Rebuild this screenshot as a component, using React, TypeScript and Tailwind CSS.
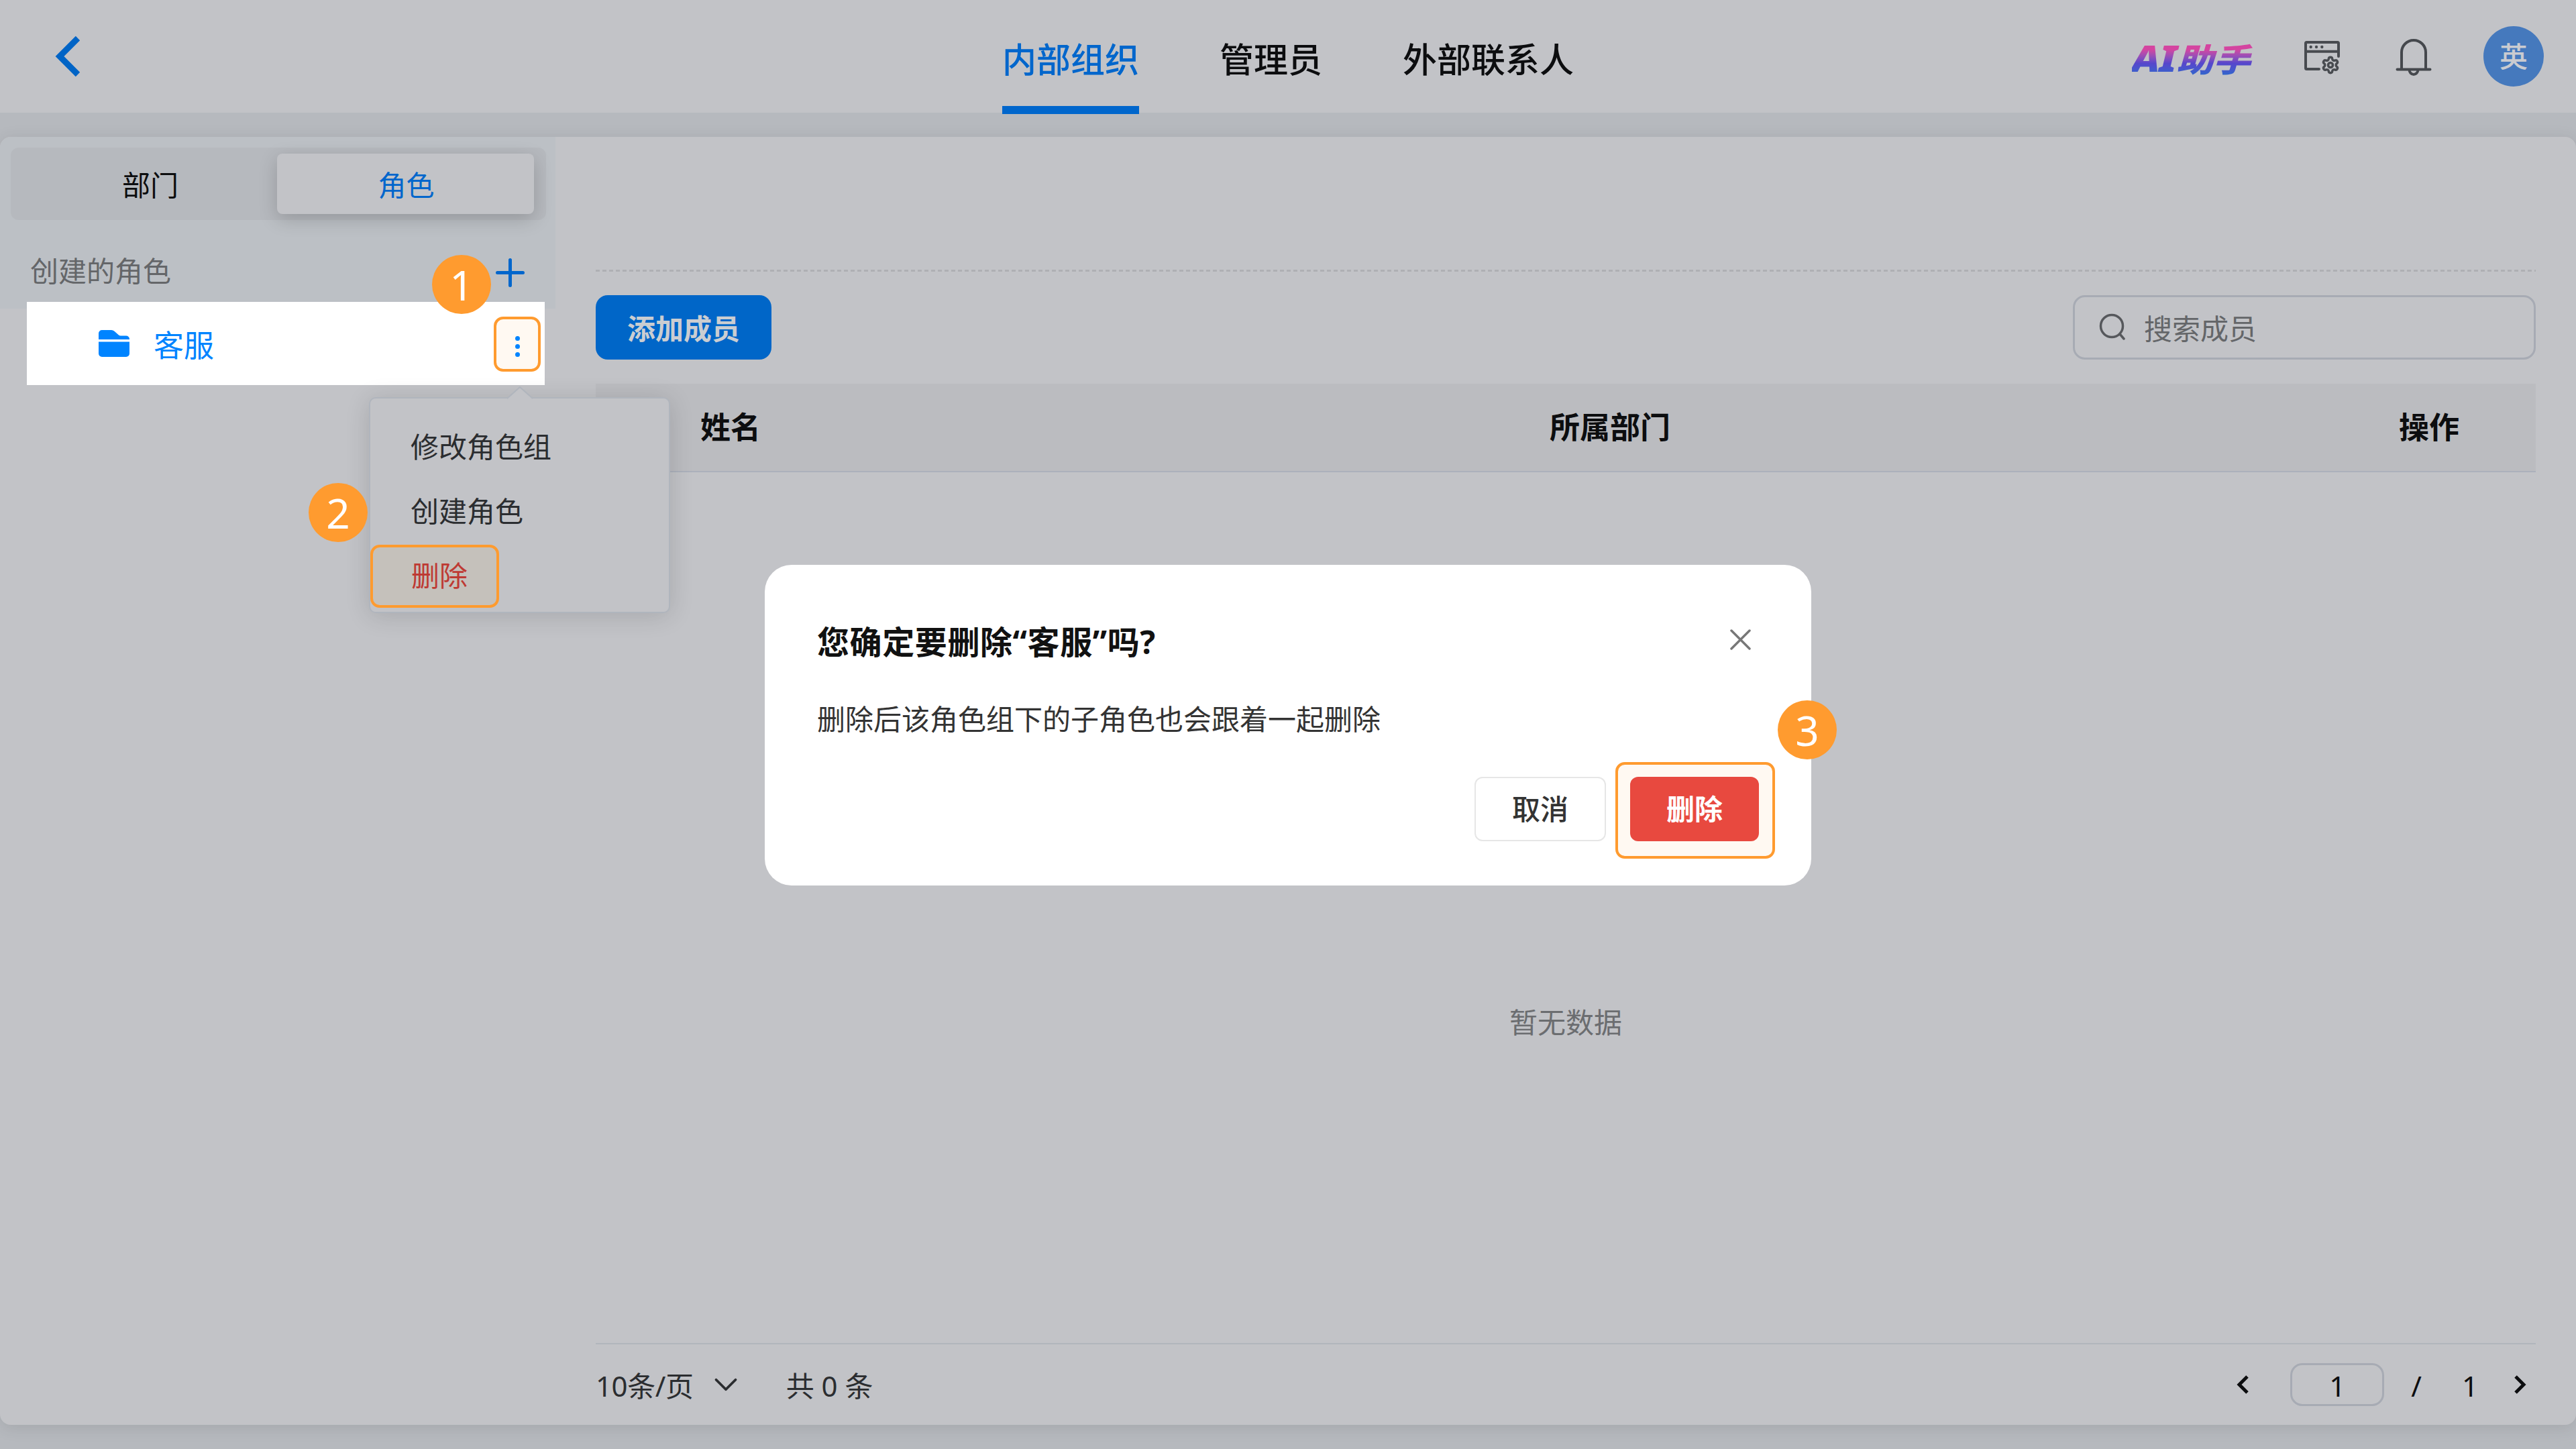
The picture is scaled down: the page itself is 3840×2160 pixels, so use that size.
import { ChevronDown, Settings } from 'lucide-react';

const tabs = ['内部组织', '管理员', '外部联系人'];

const columns = [
  { label: '姓名', width: 'w-[1266px]' },
  { label: '所属部门', width: 'w-[1266px]' },
  { label: '操作', width: 'w-[203px]' },
];

function BackIcon() {
  return (
    <svg className="w-[44px] h-[64px]" viewBox="0 0 44 64" fill="none" stroke="#0064c6" strokeWidth="9">
      <path d="M37 5 10 32l27 27" />
    </svg>
  );
}

function WindowSettingsIcon() {
  return (
    <svg className="w-[56px] h-[50px] mt-[4px]" viewBox="0 0 56 50" fill="none" stroke="#484b50" strokeWidth="4" strokeLinecap="round" strokeLinejoin="round">
      <path d="M23 42H4.500A1.500 1.500 0 0 1 3 40.500V3.500A1.500 1.500 0 0 1 4.500 2h46A1.500 1.500 0 0 1 52 3.500V23M3 15.700h49" />
      <g fill="#484b50" stroke="none">
        <circle cx="10.700" cy="9" r="2.200" />
        <circle cx="19" cy="9" r="2.200" />
        <circle cx="27.300" cy="9" r="2.200" />
      </g>
      <Settings x={26} y={22} width={28} height={28} color="#484b50" strokeWidth={3} />
    </svg>
  );
}

function BellIcon() {
  return (
    <svg className="w-[54px] h-[58px] mt-[4px]" viewBox="0 0 54 58" fill="none" stroke="#45484d" strokeWidth="4" strokeLinecap="round">
      <path d="M9 46V21a18 18 0 0 1 36 0v25M2.500 46.500h49M20.500 47a6.500 7 0 0 0 13 0" />
    </svg>
  );
}

function FolderIcon() {
  return (
    <svg className="w-[46px] h-[40px]" viewBox="0 0 46 40" fill="#0084ff">
      <path d="M0 14V5a5 5 0 0 1 5-5h14q2.500 0 4.500 1.800L30 7.500q1.200 1 3 1h8a5 5 0 0 1 5 5v.5z" />
      <path d="M0 17.500h46V35a5 5 0 0 1-5 5H5a5 5 0 0 1-5-5z" />
    </svg>
  );
}

function StepBadge({ step, className }: { step: number; className: string }) {
  return (
    <div className={`absolute flex items-center justify-center w-[88px] h-[88px] rounded-full bg-[#ff9b2f] text-white text-[62px] leading-none ${className}`}>
      {step}
    </div>
  );
}

function Header() {
  return (
    <header className="grid grid-cols-3 h-[168px] shrink-0">
      <div className="flex items-center h-[168px] pl-[79px]">
        <BackIcon />
      </div>
      <nav className="flex justify-center gap-[120px] h-[168px]">
        {tabs.map((tab, i) => (
          <div
            key={tab}
            className={`relative flex items-center h-[176px] text-[51px] leading-none whitespace-nowrap font-medium ${
              i === 0 ? 'text-[#0066cc]' : 'text-[#0c0d0f]'
            }`}
          >
            {tab}
            {i === 0 && <span className="absolute left-0 right-0 top-[158px] h-[12px] bg-[#0066cc]" />}
          </div>
        ))}
      </nav>
      <div className="flex items-center justify-end h-[168px] pr-[48px]">
        <div className="w-[182px] mr-[74px] pt-[8px]">
          <span className="block w-[165px] origin-left scale-x-[1.15] text-[48px] leading-[58px] font-black italic whitespace-nowrap text-transparent bg-clip-text bg-linear-to-b from-[#d444a0] from-25% via-[#5646cc] via-60% to-[#2c66cc] to-90%">
            <span className="text-[54px] leading-none tracking-[-1px]">AI</span>助手
          </span>
        </div>
        <WindowSettingsIcon />
        <div className="w-[81px]" />
        <BellIcon />
        <div className="ml-[77px] flex items-center justify-center w-[90px] h-[90px] rounded-full bg-[#4579bd] text-[#c9cbd0] text-[42px] leading-none font-medium">
          英
        </div>
      </div>
    </header>
  );
}

function Sidebar() {
  return (
    <aside className="w-[828px] shrink-0">
      <div className="h-[256px] pt-[16px] pl-[16px] pr-[14px] rounded-tl-[16px] bg-[#bcc0c5]">
        <div className="flex h-[108px] p-[9px] pr-[18px] rounded-[12px] bg-[#b6b9be] text-[42px] leading-none">
          <div className="flex flex-1 items-center justify-center pl-[26px] pr-[16px] pt-[3px] text-[#0c0d0f]">部门</div>
          <div className="flex w-[383px] items-center justify-center pl-[2px] pt-[3px] rounded-[8px] bg-[#c2c3c7] text-[#0066cc] shadow-[0_8px_28px_rgba(0,0,0,0.18)]">
            角色
          </div>
        </div>
        <div className="flex items-center justify-between pl-[29px] pr-[32px] pt-[52px] text-[42px] leading-[56px] text-[#646669]">
          <span className="mt-[-4px]">创建的角色</span>
          <svg className="w-[43px] h-[43px]" viewBox="0 0 43 43" stroke="#0066cc" strokeWidth="5" strokeLinecap="round">
            <path d="M21.500 2.500v38M2.500 21.500h38" />
          </svg>
        </div>
      </div>
      {/* Highlighted role group */}
      <div className="relative flex items-center w-[772px] h-[124px] ml-[40px] mt-[-10px] pl-[107px] bg-white">
        <FolderIcon />
        <span className="ml-[36px] mt-[4px] text-[45px] leading-none text-[#0084ff]">客服</span>
        <div className="ml-auto mr-[6px] flex flex-col items-center justify-center gap-[5px] w-[70px] h-[82px] mt-[2px] rounded-[14px] border-4 border-[#ff9b2f] bg-[#fff9f2] pt-[6px]">
          <i className="w-[7px] h-[7px] rounded-full bg-[#0084ff]" />
          <i className="w-[7px] h-[7px] rounded-full bg-[#0084ff]" />
          <i className="w-[7px] h-[7px] rounded-full bg-[#0084ff]" />
        </div>
      </div>
    </aside>
  );
}

function RoleMenu() {
  return (
    <div className="absolute left-[550px] top-[592px] w-[449px] h-[322px] pt-[24px] rounded-[10px] border-2 border-[#b0b5bd] bg-[#c2c3c7] shadow-[0_4px_36px_rgba(0,0,0,0.14)] text-[42px] leading-[96px] text-[#2b2d30]">
      <svg className="absolute left-[203px] top-[-18px] w-[40px] h-[20px]" viewBox="0 0 40 20" fill="#c2c3c7" stroke="#b0b5bd" strokeWidth="2">
        <path d="M1 18 20 1l19 17" />
      </svg>
      <div className="pl-[60px]">修改角色组</div>
      <div className="pl-[60px]">创建角色</div>
      <div className="flex items-center w-[192px] h-[94px] mt-[2px] pl-[57px] pb-[2px] rounded-[14px] border-4 border-[#ff9b2f] bg-[#c5c1bb] text-[#be3a33] leading-none">
        删除
      </div>
    </div>
  );
}

function Members() {
  return (
    <main className="flex flex-col flex-1 pl-[60px] pr-[60px]">
      <div className="h-[198px] shrink-0" />
      <div className="h-[3px] shrink-0 bg-[repeating-linear-gradient(90deg,#afb0b4_0_6px,transparent_6px_10px)]" />
      <div className="flex justify-between mt-[35px]">
        <button className="w-[262px] h-[96px] pt-[3px] rounded-[18px] bg-[#0066c8] text-[42px] leading-none font-bold text-[#cbcdd1]">
          添加成员
        </button>
        <div className="flex items-center w-[690px] h-[96px] pl-[36px] rounded-[18px] border-3 border-[#a7abb4] text-[42px] leading-none text-[#646669]">
          <svg className="w-[40px] h-[40px] mr-[27px] mt-[-2px]" viewBox="0 0 40 40" fill="none" stroke="#56585c" strokeWidth="3.500" strokeLinecap="round">
            <circle cx="19" cy="19" r="16.500" />
            <path d="m31 31 6 7" />
          </svg>
          <span className="pt-[3px]">搜索成员</span>
        </div>
      </div>
      <div className="flex items-center h-[132px] mt-[36px] pl-[156px] pb-[2px] shrink-0 border-b-2 border-[#acb1bb] bg-[#bbbcc0] text-[45px] leading-none font-bold text-[#0c0d0f]">
        {columns.map(col => (
          <div key={col.label} className={`${col.width} shrink-0`}>{col.label}</div>
        ))}
      </div>
      <div className="flex-1 pt-[799px] text-center text-[42px] leading-[42px] text-[#6b6d70]">暂无数据</div>
      <footer className="flex items-center h-[122px] shrink-0 border-t-2 border-[#b1b6bc] text-[42px] leading-none text-[#2b2d30]">
        <span className="pt-[3px] tracking-[-0.4px]">10条/页</span>
        <ChevronDown className="w-[58px] h-[58px] ml-[19px]" strokeWidth={1.600} />
        <span className="ml-[61px] pt-[3px]">共 0 条</span>
        <div className="flex items-center ml-auto pr-[14px] text-[#0c0d0f]">
          <svg className="w-[20px] h-[30px]" viewBox="0 0 20 30" fill="none" stroke="currentColor" strokeWidth="5">
            <path d="M16 3 4 15l12 12" />
          </svg>
          <div className="flex items-center justify-center ml-[60px] w-[140px] h-[64px] pt-[3px] rounded-[18px] border-3 border-[#a7abb4]">1</div>
          <span className="ml-[40px] pt-[3px]">/</span>
          <span className="ml-[60px] pt-[3px]">1</span>
          <svg className="w-[20px] h-[30px] ml-[52px]" viewBox="0 0 20 30" fill="none" stroke="currentColor" strokeWidth="5">
            <path d="m4 3 12 12L4 27" />
          </svg>
        </div>
      </footer>
    </main>
  );
}

function ConfirmDialog() {
  return (
    <div className="absolute left-[1140px] top-[842px] flex flex-col w-[1560px] h-[478px] rounded-[40px] bg-white">
      <div className="flex items-center justify-between pl-[78px] pr-[90px] pt-[82px]">
        <h2 className="text-[48px] leading-[66px] tracking-[0.6px] font-bold text-[#111]">您确定要删除“客服”吗?</h2>
        <svg className="w-[31px] h-[31px] mt-[-8px]" viewBox="0 0 31 31" stroke="#777" strokeWidth="3.500" strokeLinecap="round">
          <path d="m2 2 27 27M29 2 2 29" />
        </svg>
      </div>
      <p className="pl-[78px] mt-[52px] text-[42px] leading-[60px] text-[#333]">删除后该角色组下的子角色也会跟着一起删除</p>
      <div className="flex items-center justify-end gap-[14px] mt-[34px] pr-[54px] text-[42px] leading-none">
        <button className="w-[196px] h-[96px] mt-[-4px] rounded-[12px] border-2 border-[#e6e6e6] font-medium text-[#333]">取消</button>
        <div className="flex items-center justify-center w-[238px] h-[144px] pb-[4px] pr-[2px] rounded-[14px] border-4 border-[#ff9b2f] bg-[#fff9f2]">
          <button className="w-[192px] h-[96px] rounded-[12px] bg-[#e8493f] font-bold text-white">删除</button>
        </div>
      </div>
    </div>
  );
}

export default function App() {
  return (
    <div className="relative flex flex-col w-[3840px] h-[2160px] overflow-hidden bg-[#b6b9be] font-['Noto_Sans','Noto_Sans_CJK_SC',sans-serif]">
      <div className="bg-[#c2c3c7]">
        <Header />
      </div>
      <div className="flex mt-[36px] h-[1920px] rounded-[16px] bg-[#c2c3c7] shadow-[0_4px_24px_rgba(0,0,0,0.1)]">
        <Sidebar />
        <Members />
      </div>
      <RoleMenu />
      <ConfirmDialog />
      <StepBadge step={1} className="left-[644px] top-[380px]" />
      <StepBadge step={2} className="left-[460px] top-[720px]" />
      <StepBadge step={3} className="left-[2650px] top-[1044px]" />
    </div>
  );
}
